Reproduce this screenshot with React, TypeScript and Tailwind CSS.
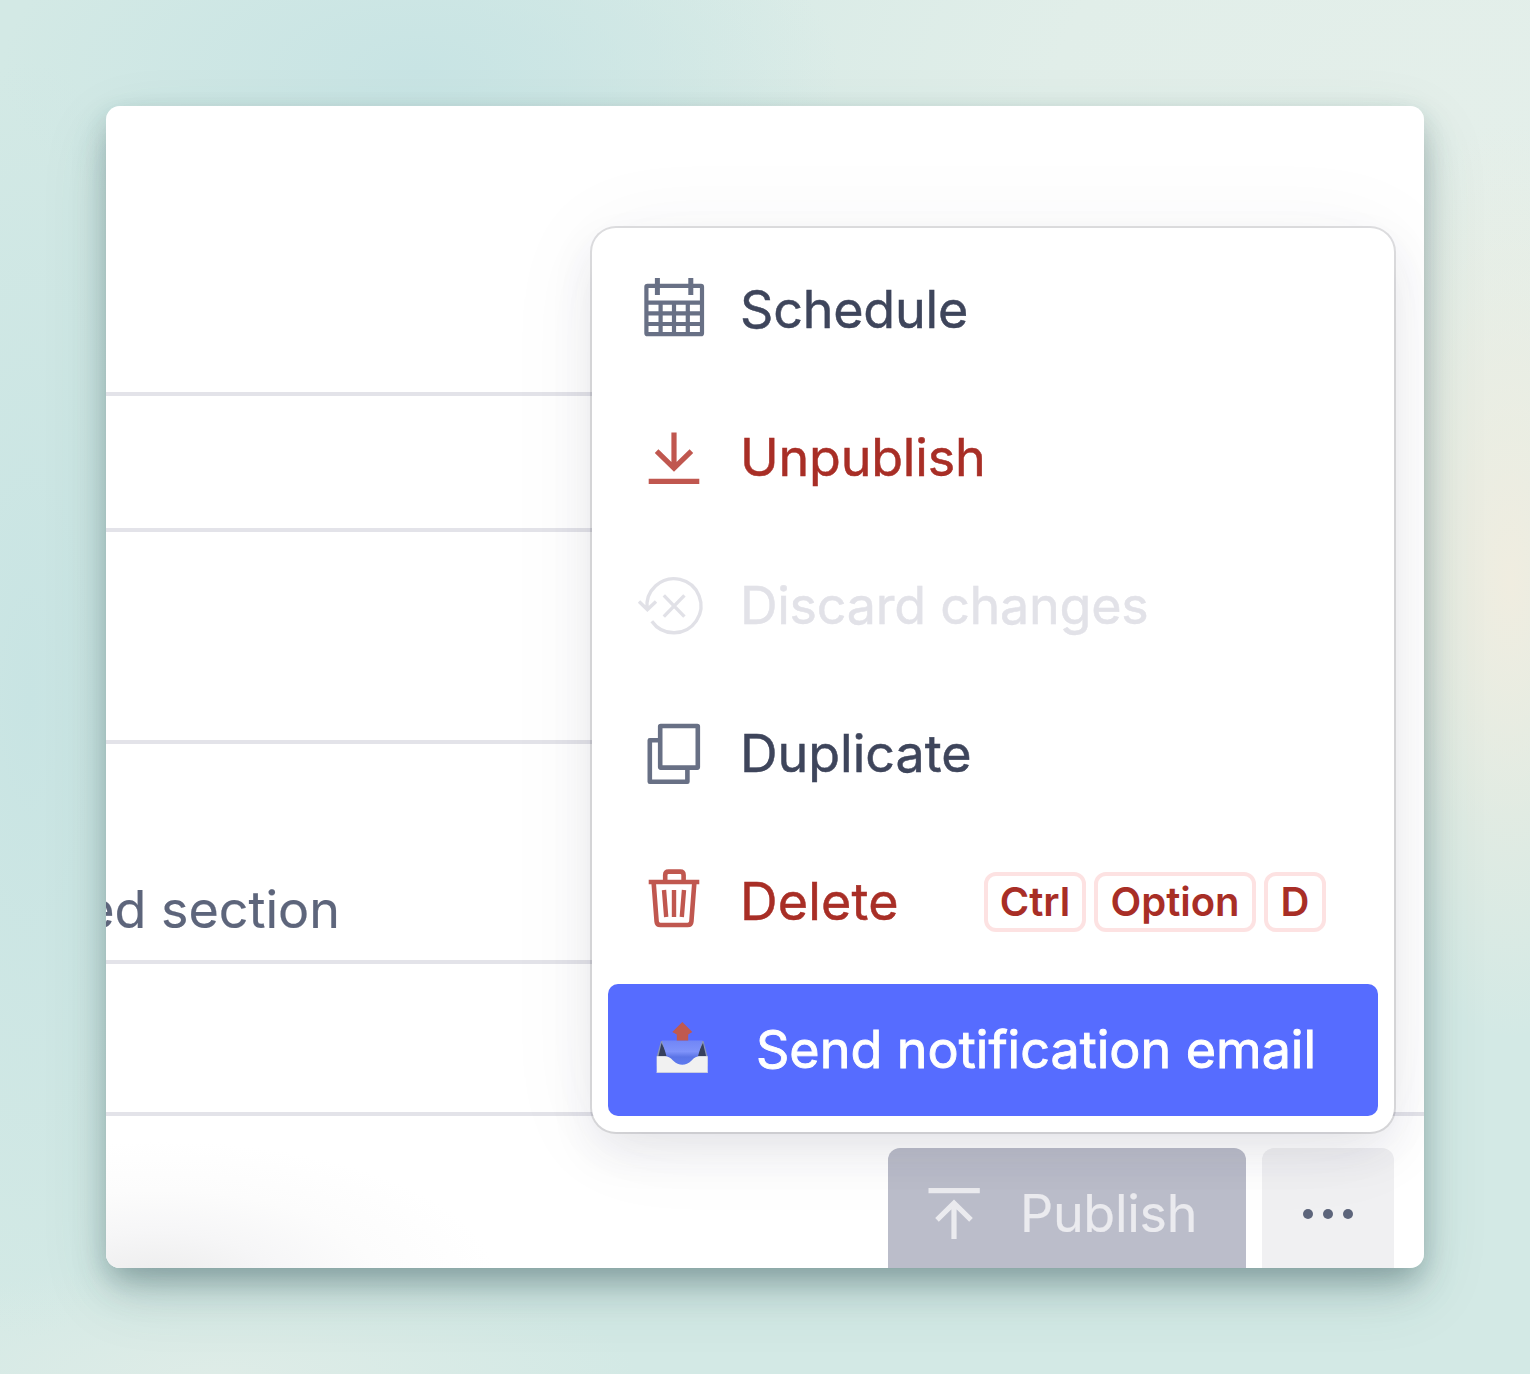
import type { ReactNode } from "react";

function Icon({ children, width = 5 }: { children: ReactNode; width?: number }) {
  return (
    <svg
      className="h-[84px] w-[84px] shrink-0"
      viewBox="0 0 84 84"
      fill="none"
      stroke="currentColor"
      strokeWidth={width}
      aria-hidden="true"
    >
      {children}
    </svg>
  );
}

const CalendarIcon = () => (
  <Icon width={4.2}>
    <rect x="14.4" y="17.8" width="55.6" height="48.4" rx="1" />
    <path d="M14 34.7H70M14 45.4H70M14 56H70M28.6 34.7V66M42 34.7V66M55.8 34.7V66" />
    <path d="M25.4 10V27M58.8 10V27" strokeWidth={5} />
  </Icon>
);

const UnpublishIcon = () => (
  <Icon width={5.2}>
    <path d="M42 16.5V52M24.6 35.2L42 52.2L59.4 35.2M16.7 65.3H67.3" />
  </Icon>
);

const DiscardIcon = () => (
  <Icon width={3.4}>
    <path d="M15.2 45.5A27 27 0 1 1 19.8 57.2M7 37.6L15.4 45.6L24 37.6M31.8 31.4L52.4 52.6M52.4 31.4L31.8 52.6" />
  </Icon>
);

const DuplicateIcon = () => (
  <Icon width={4.6}>
    <rect x="28.2" y="14" width="37.6" height="41.6" rx="0.5" />
    <path d="M28 28.3H17.8V69.7H55.4V56" strokeLinejoin="round" />
  </Icon>
);

const TrashIcon = () => (
  <Icon width={4.6}>
    <path d="M16.7 22H67.3M33.2 22V15Q33.2 11.6 36.6 11.6H48.2Q51.6 11.6 51.6 15V22M21.6 22L24.6 61.5Q24.9 65 28.4 65H55.6Q59.1 65 59.4 61.5L62.4 22" />
    <path d="M32 30L34.2 57M42 30V57M52 30L49.8 57" strokeWidth={4.4} />
  </Icon>
);

const OutboxIcon = () => (
  <svg className="h-[84px] w-[84px] shrink-0" viewBox="0 0 84 84" aria-hidden="true">
    <defs>
      <linearGradient id="tray" x1="0" y1="0" x2="0" y2="1">
        <stop offset="0" stopColor="#7186f6" />
        <stop offset="0.4" stopColor="#7f93fa" />
        <stop offset="0.6" stopColor="#5b74e6" />
        <stop offset="1" stopColor="#5f7df4" />
      </linearGradient>
    </defs>
    <path d="M21 33H63.5L67.5 48V58H16.8V48Z" fill="#8b96b4" />
    <path d="M21.5 35L28 48H18.5Z" fill="#37405c" />
    <path d="M63 35L56.5 48H66Z" fill="#37405c" />
    <path d="M22 32.5H62.5L57.5 50Q50 60 42.3 60Q34.5 60 27 50Z" fill="url(#tray)" />
    <path d="M42.3 14L52.3 24L48.2 26.5V32.5H36.8V26.5L32.3 24Z" fill="#c0594f" />
    <path d="M16.7 48.2H25Q29 48.2 33 52.4Q37.6 56.8 42.3 56.8Q47 56.8 51.6 52.4Q55.5 48.2 59.5 48.2H67.7V64.8H16.7Z" fill="#f1f1f1" />
    <path d="M16.7 64H67.7V65H16.7Z" fill="#c9cde0" />
  </svg>
);

function Key({ label, className }: { label: string; className: string }) {
  return (
    <kbd
      className={`flex h-[60px] items-center justify-center rounded-[12px] border-4 border-[#fde2e2] font-['Inter',sans-serif] text-[40px] leading-none font-semibold text-[#a82e26] ${className}`}
    >
      {label}
    </kbd>
  );
}

function Item({
  icon,
  label,
  iconClass,
  labelClass,
  children,
}: {
  icon: ReactNode;
  label: string;
  iconClass: string;
  labelClass: string;
  children?: ReactNode;
}) {
  return (
    <button type="button" className="flex h-[132px] w-full items-center pl-6 text-left">
      <span className={iconClass}>{icon}</span>
      <span className={`ml-[24px] text-[52px] leading-none whitespace-nowrap [-webkit-text-stroke:0.5px_currentColor] ${labelClass}`}>
        {label}
      </span>
      {children}
    </button>
  );
}

export default function App() {
  return (
    <div className="h-[1374px] w-[1530px] overflow-hidden bg-[#d3e9e5] bg-[radial-gradient(ellipse_420px_190px_at_420px_70px,#c8e4e4_0%,transparent_100%),radial-gradient(ellipse_170px_460px_at_1510px_580px,#f0ede0_0%,transparent_100%),radial-gradient(ellipse_180px_640px_at_30px_700px,#c8e4e3_0%,transparent_100%),radial-gradient(ellipse_420px_110px_at_220px_1374px,#deece7_0%,transparent_100%),radial-gradient(ellipse_1000px_700px_at_1450px_120px,#e4efea_0%,#e1eee9_40%,transparent_100%)] p-[106px] font-['Inter',sans-serif]">
      <div className="h-[1162px] w-[1318px] rounded-[14px] shadow-[0_20px_36px_-6px_rgba(40,70,80,0.34),0_8px_22px_rgba(40,80,80,0.12),0_24px_68px_rgba(40,90,85,0.12)]">
        <main className="relative flex h-full flex-col overflow-hidden rounded-[14px] bg-white">
          <div className="h-[290px] w-[500px] border-b-4 border-[#e3e3e9]" />
          <div className="h-[136px] w-[500px] border-b-4 border-[#e3e3e9]" />
          <div className="h-[212px] w-[500px] border-b-4 border-[#e3e3e9]" />
          <div className="flex h-[220px] w-[500px] border-b-4 border-[#e3e3e9]">
            <div className="mt-[136px] flex h-[60px] w-[234px] items-center justify-end overflow-hidden">
              <span className="text-[52px] leading-none whitespace-nowrap text-[#5d657b] [-webkit-text-stroke:0.2px_currentColor]">
                ed section
              </span>
            </div>
          </div>
          <div className="h-[152px] border-b-4 border-[#e3e3e9]" />
          <footer className="flex h-[152px] justify-end gap-4 bg-[radial-gradient(ellipse_340px_140px_at_50px_165px,#ececec_0%,#f6f6f7_35%,#fcfcfc_65%,transparent_100%)] pt-8 pr-[30px]">
            <button type="button" className="flex h-[132px] w-[358px] items-center rounded-[12px] bg-[#bbbdca] pl-6 text-[#ebebef]">
              <Icon width={5.2}>
                <path d="M16.5 18.7H67.8M42 67V31M25 47.8L42 31.2L59 47.8" />
              </Icon>
              <span className="ml-[24px] text-[52px] leading-none tracking-[-0.3px] [-webkit-text-stroke:0.2px_currentColor]">Publish</span>
            </button>
            <button type="button" aria-label="More actions" className="flex h-[132px] w-[132px] items-center justify-center gap-[9.6px] rounded-[12px] bg-[#f0f0f2]">
              <span className="h-[10.6px] w-[10.6px] rounded-full bg-[#5d657b]" />
              <span className="h-[10.6px] w-[10.6px] rounded-full bg-[#5d657b]" />
              <span className="h-[10.6px] w-[10.6px] rounded-full bg-[#5d657b]" />
            </button>
          </footer>

          <div className="absolute top-[122px] left-[486px] flex w-[802px] flex-col gap-4 rounded-[24px] bg-white p-4 shadow-[0_0_0_2px_rgba(20,20,30,0.13),0_20px_48px_-4px_rgba(50,50,80,0.11),0_8px_100px_rgba(50,50,80,0.05)]">
            <Item icon={<CalendarIcon />} label="Schedule" iconClass="text-[#687085]" labelClass="tracking-[-0.2px] text-[#3e455b]" />
            <Item icon={<UnpublishIcon />} label="Unpublish" iconClass="text-[#c0574f]" labelClass="tracking-[-0.2px] text-[#a82e26]" />
            <Item icon={<DiscardIcon />} label="Discard changes" iconClass="text-[#e1e1e7]" labelClass="tracking-[-0.25px] text-[#e2e2e8]" />
            <Item icon={<DuplicateIcon />} label="Duplicate" iconClass="text-[#687085]" labelClass="text-[#3e455b]" />
            <Item icon={<TrashIcon />} label="Delete" iconClass="text-[#c0574f]" labelClass="tracking-[0.2px] text-[#a82e26]">
              <span className="mr-[52px] ml-auto flex gap-2">
                <Key label="Ctrl" className="w-[102px]" />
                <Key label="Option" className="w-[162px]" />
                <Key label="D" className="w-[62px]" />
              </span>
            </Item>
            <button type="button" className="flex h-[132px] w-full items-center rounded-[10px] bg-[#566cff] pl-8 text-left text-white">
              <OutboxIcon />
              <span className="ml-[32px] text-[52px] leading-none whitespace-nowrap [-webkit-text-stroke:0.9px_currentColor]">
                Send notification email
              </span>
            </button>
          </div>
        </main>
      </div>
    </div>
  );
}
